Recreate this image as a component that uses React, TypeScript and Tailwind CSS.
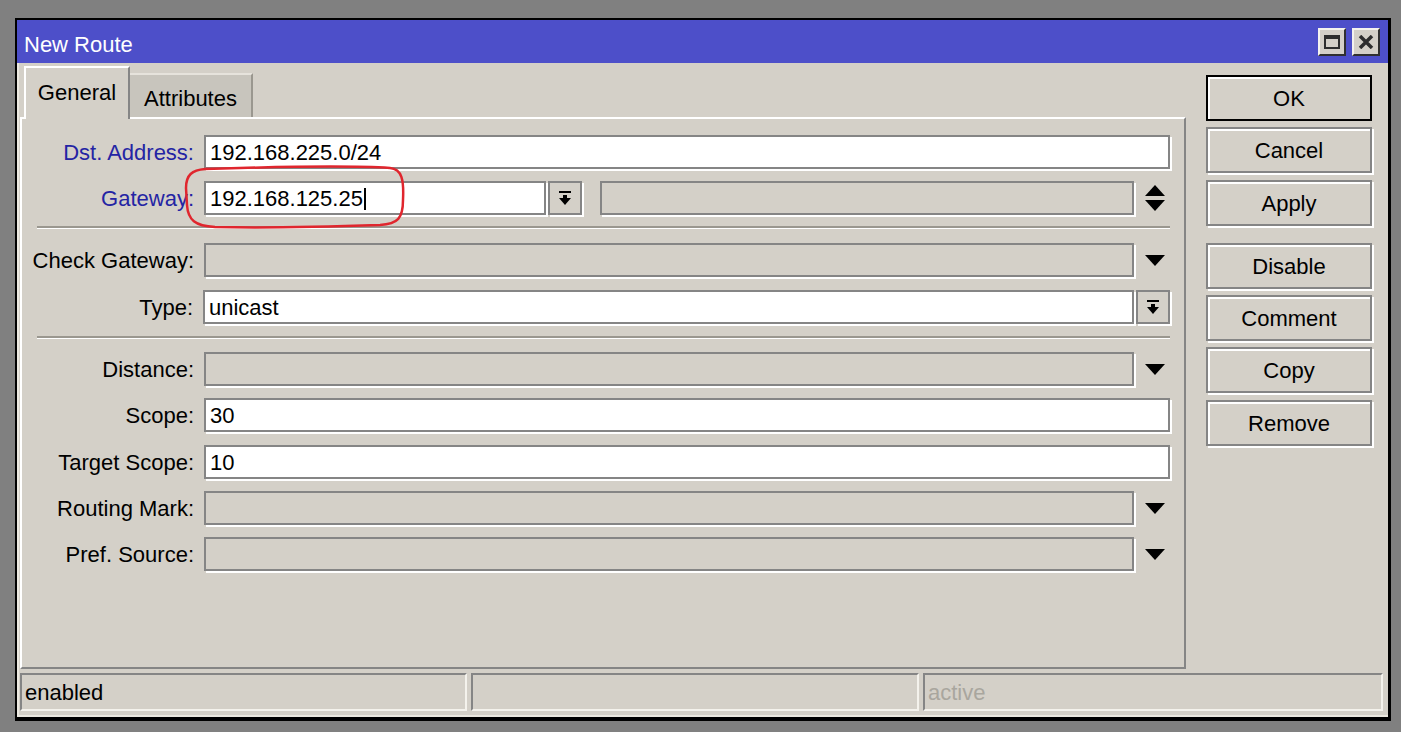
import React from "react";

const FONT = { fontFamily: '"Liberation Sans", Arial, sans-serif' };

function Field({ w, value, disabled, cursor }: { w: string; value?: string; disabled?: boolean; cursor?: boolean }) {
  return (
    <div
      className={`${w} h-[34px] border-2 border-[#858585] shadow-[2px_2px_0_#ffffff] flex items-center pl-[4px] pt-[1px] text-[22px] text-black ${
        disabled ? "bg-[#d4d0c8]" : "bg-white"
      }`}
    >
      <span>{value}</span>
      {cursor && <span className="inline-block w-[2px] h-[22px] bg-black ml-[1px]" />}
    </div>
  );
}

function DropBtn() {
  return (
    <div className="w-[34px] h-[34px] border-2 border-[#858585] shadow-[2px_2px_0_#ffffff] bg-[#d4d0c8] flex items-center justify-center">
      <svg width="14" height="16" viewBox="0 0 14 16">
        <rect x="1" y="1" width="12" height="2" fill="#000" />
        <rect x="5" y="5" width="4" height="4" fill="#000" />
        <polygon points="1,8 13,8 7,15" fill="#000" />
      </svg>
    </div>
  );
}

function DownArrow() {
  return (
    <div className="flex-1 flex justify-center pl-[6px]">
      <svg width="20" height="11" viewBox="0 0 20 11">
        <polygon points="0,0 20,0 10,11" fill="#000" />
      </svg>
    </div>
  );
}

function UpDown() {
  return (
    <div className="flex-1 flex justify-center pl-[6px]">
      <svg width="20" height="26" viewBox="0 0 20 26">
        <polygon points="10,0 20,11 0,11" fill="#000" />
        <polygon points="0,15 20,15 10,26" fill="#000" />
      </svg>
    </div>
  );
}

function Label({ text, blue }: { text: string; blue?: boolean }) {
  return (
    <div className={`w-[172px] text-right text-[22px] pt-[1px] ${blue ? "text-[#2424a4]" : "text-black"}`}>{text}</div>
  );
}

function Sep({ mt }: { mt: string }) {
  return <div className={`${mt} ml-[15px] w-[1133px] h-[3px] border-t-2 border-[#9a978f] border-b border-b-white`} />;
}

function Btn({ label, mt, ok }: { label: string; mt?: string; ok?: boolean }) {
  return (
    <div
      className={`${mt ?? ""} w-[166px] h-[46px] flex items-center justify-center pt-[1px] text-[22px] text-black bg-[#d4d0c8] border-2 ${
        ok ? "border-black shadow-[inset_2px_2px_0_#ffffff]" : "border-[#858585] shadow-[inset_2px_2px_0_#ffffff,2px_2px_0_#ffffff]"
      }`}
    >
      {label}
    </div>
  );
}

export default function App() {
  return (
    <div className="relative w-[1401px] h-[732px] bg-[#808080] pt-[18px] pl-[15px] overflow-hidden" style={FONT}>
      <div className="w-[1376px] h-[703px] border-black border-l-2 border-t-2 border-r-[3px] border-b-4 bg-[#d4d0c8] flex flex-col">
        {/* Title bar */}
        <div className="h-[43px] bg-[#4d4fc9] flex items-center pl-[7px] pr-[8px]">
          <div className="text-white text-[22px] flex-1 pt-[5px]">New Route</div>
          <div className="w-[28px] h-[28px] bg-[#d4d0c8] border-2 border-t-[#f4f2ee] border-l-[#f4f2ee] border-r-[#303030] border-b-[#303030] flex items-center justify-center">
            <svg width="16" height="14" viewBox="0 0 16 14">
              <rect x="1" y="1" width="14" height="12" fill="none" stroke="#2e2e2e" strokeWidth="2" />
              <rect x="1" y="1" width="14" height="3" fill="#2e2e2e" />
            </svg>
          </div>
          <div className="ml-[6px] w-[28px] h-[28px] bg-[#d4d0c8] border-2 border-t-[#f4f2ee] border-l-[#f4f2ee] border-r-[#303030] border-b-[#303030] flex items-center justify-center">
            <svg width="16" height="14" viewBox="0 0 16 14">
              <path d="M2 1 L14 13 M14 1 L2 13" stroke="#2e2e2e" strokeWidth="3.5" />
            </svg>
          </div>
        </div>

        {/* Body */}
        <div className="flex-1 flex flex-col border-l-2 border-b-2 border-[#ebe8e0] pl-[1px]">
          <div className="flex h-[606px]">
            {/* Left column */}
            <div className="w-[1166px] flex flex-col">
              <div className="h-[54px] flex items-end pl-[4px]">
                <div className="relative z-10 -mb-[2px] h-[53px] w-[106px] bg-[#d4d0c8] border-l-2 border-t-2 border-white border-r-2 border-r-[#858585] flex items-center justify-center text-[22px] text-black pb-[2px]">
                  General
                </div>
                <div className="h-[44px] w-[123px] bg-[#c8c5bd] border-t-2 border-[#e6e3dc] border-r-2 border-r-[#9a978f] flex items-center justify-center text-[22px] text-black pt-[4px]">
                  Attributes
                </div>
              </div>
              <div className="h-[552px] border-l-2 border-t-2 border-white border-r-2 border-b-2 border-r-[#858585] border-b-[#858585] pt-[16px] pr-[14px] flex flex-col">
                <div className="flex items-center h-[34px]">
                  <Label text="Dst. Address:" blue />
                  <div className="ml-[10px]">
                    <Field w="w-[966px]" value="192.168.225.0/24" />
                  </div>
                </div>
                <div className="flex items-center h-[34px] mt-[12px]">
                  <Label text="Gateway:" blue />
                  <div className="ml-[10px]">
                    <Field w="w-[342px]" value="192.168.125.25" cursor />
                  </div>
                  <div className="ml-[2px]">
                    <DropBtn />
                  </div>
                  <div className="ml-[18px]">
                    <Field w="w-[534px]" disabled />
                  </div>
                  <UpDown />
                </div>
                <Sep mt="mt-[11px]" />
                <div className="flex items-center h-[34px] mt-[14px]">
                  <Label text="Check Gateway:" />
                  <div className="ml-[10px]">
                    <Field w="w-[930px]" disabled />
                  </div>
                  <DownArrow />
                </div>
                <div className="flex items-center h-[34px] mt-[13px]">
                  <Label text="Type:" />
                  <div className="ml-[10px]">
                    <Field w="w-[931px]" value="unicast" />
                  </div>
                  <div className="ml-[2px]">
                    <DropBtn />
                  </div>
                </div>
                <Sep mt="mt-[12px]" />
                <div className="flex items-center h-[34px] mt-[13px]">
                  <Label text="Distance:" />
                  <div className="ml-[10px]">
                    <Field w="w-[930px]" disabled />
                  </div>
                  <DownArrow />
                </div>
                <div className="flex items-center h-[34px] mt-[12px]">
                  <Label text="Scope:" />
                  <div className="ml-[10px]">
                    <Field w="w-[966px]" value="30" />
                  </div>
                </div>
                <div className="flex items-center h-[34px] mt-[13px]">
                  <Label text="Target Scope:" />
                  <div className="ml-[10px]">
                    <Field w="w-[966px]" value="10" />
                  </div>
                </div>
                <div className="flex items-center h-[34px] mt-[12px]">
                  <Label text="Routing Mark:" />
                  <div className="ml-[10px]">
                    <Field w="w-[930px]" disabled />
                  </div>
                  <DownArrow />
                </div>
                <div className="flex items-center h-[34px] mt-[12px]">
                  <Label text="Pref. Source:" />
                  <div className="ml-[10px]">
                    <Field w="w-[930px]" disabled />
                  </div>
                  <DownArrow />
                </div>
              </div>
            </div>

            {/* Right buttons */}
            <div className="ml-[20px] pt-[12px] flex flex-col">
              <Btn label="OK" ok />
              <Btn label="Cancel" mt="mt-[6px]" />
              <Btn label="Apply" mt="mt-[7px]" />
              <Btn label="Disable" mt="mt-[17px]" />
              <Btn label="Comment" mt="mt-[6px]" />
              <Btn label="Copy" mt="mt-[6px]" />
              <Btn label="Remove" mt="mt-[7px]" />
            </div>
          </div>

          {/* Status bar */}
          <div className="mt-[4px] h-[38px] flex gap-[4px]">
            <div className="w-[447px] border-2 border-t-[#858585] border-l-[#858585] border-r-[#f4f2ec] border-b-[#f4f2ec] flex items-center pl-[3px] pt-[1px] text-[22px] text-black">
              enabled
            </div>
            <div className="w-[448px] border-2 border-t-[#858585] border-l-[#858585] border-r-[#f4f2ec] border-b-[#f4f2ec]" />
            <div className="w-[460px] border-2 border-t-[#858585] border-l-[#858585] border-r-[#f4f2ec] border-b-[#f4f2ec] flex items-center pl-[3px] pt-[1px] text-[22px] text-[#a9a69e]">
              active
            </div>
          </div>
        </div>
      </div>

      {/* Red annotation */}
      <svg className="absolute left-0 top-0 pointer-events-none" width="1401" height="732" viewBox="0 0 1401 732">
        <path
          d="M205 169 C300 166 360 166 390 168 C402 169 404 180 403 200 C403 218 398 224 380 225 C320 227 260 228 215 227 C195 226 188 220 187 205 L186 188 C186 175 192 170 205 169 Z"
          fill="none"
          stroke="#e0262e"
          strokeWidth="2.5"
        />
      </svg>
    </div>
  );
}
